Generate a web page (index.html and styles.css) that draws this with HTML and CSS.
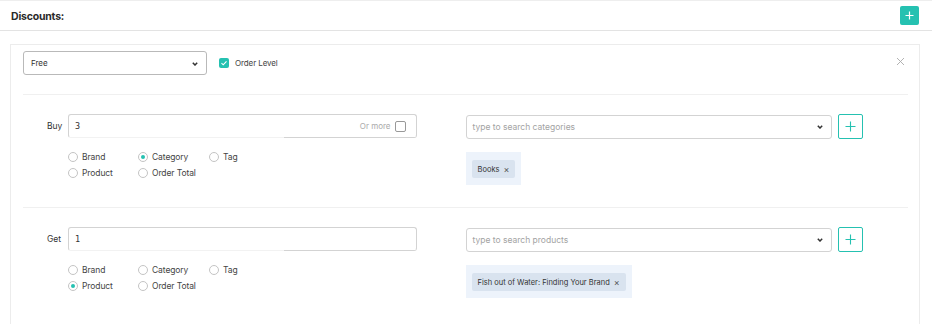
FILE: index.html
```html
<!DOCTYPE html>
<html lang="en">

<head>
    <meta charset="UTF-8">
    <meta name="viewport" content="width=device-width, initial-scale=1.0">
    <title>Discounts</title>
    <link rel="stylesheet" href="styles.css">
</head>

<body>

    <div class="topbar">
        <h2 class="topbar__title">Discounts:</h2>
        <button class="btn-add">
            <svg width="9" height="9" viewBox="0 0 9 9"><path d="M4.5 0.5v8M0.5 4.5h8" stroke="#fff" stroke-width="1.2" /></svg>
        </button>
    </div>

    <div class="content">
        <div class="card">
            <div class="card__head">
                <div class="select select--type">
                    <span>Free</span>
                    <svg class="chevron" width="6" height="4" viewBox="0 0 6 4"><path d="M0.8 0.8l2.2 2.2 2.2-2.2" fill="none" stroke="#333" stroke-width="1.5" /></svg>
                </div>
                <label class="check">
                    <span class="check__box">
                        <svg width="8" height="8" viewBox="0 0 8 8"><path d="M1.5 4.2l1.7 1.6 3.3-3.5" fill="none" stroke="#fff" stroke-width="1.1" /></svg>
                    </span>
                    Order Level
                </label>
                <span class="card__close">
                    <svg width="9" height="9" viewBox="0 0 9 9"><path d="M1 1l7 7M8 1l-7 7" stroke="#aaa" stroke-width="0.9" /></svg>
                </span>
            </div>

            <div class="rule">
                <div class="rule__left">
                    <div class="rule__line">
                        <span class="rule__label">Buy</span>
                        <div class="qty">
                            <span class="qty__value">3</span>
                            <span class="qty__more">Or more <span class="qty__box"></span></span>
                        </div>
                    </div>
                    <div class="radios">
                        <label class="radio"><span class="radio__dot"></span>Brand</label>
                        <label class="radio"><span class="radio__dot radio__dot--on"></span>Category</label>
                        <label class="radio"><span class="radio__dot"></span>Tag</label>
                        <label class="radio"><span class="radio__dot"></span>Product</label>
                        <label class="radio"><span class="radio__dot"></span>Order Total</label>
                    </div>
                </div>
                <div class="rule__right">
                    <div class="search">
                        <div class="select select--search">
                            <span>type to search categories</span>
                            <svg class="chevron" width="6" height="4" viewBox="0 0 6 4"><path d="M0.8 0.8l2.2 2.2 2.2-2.2" fill="none" stroke="#333" stroke-width="1.5" /></svg>
                        </div>
                        <button class="btn-outline">
                            <svg width="11" height="11" viewBox="0 0 11 11"><path d="M5.5 0.5v10M0.5 5.5h10" stroke="#25c1b1" stroke-width="1.1" /></svg>
                        </button>
                    </div>
                    <div class="tags">
                        <span class="tag">Books <span class="tag__x">&times;</span></span>
                    </div>
                </div>
            </div>

            <div class="rule">
                <div class="rule__left">
                    <div class="rule__line">
                        <span class="rule__label">Get</span>
                        <div class="qty">
                            <span class="qty__value">1</span>
                        </div>
                    </div>
                    <div class="radios">
                        <label class="radio"><span class="radio__dot"></span>Brand</label>
                        <label class="radio"><span class="radio__dot"></span>Category</label>
                        <label class="radio"><span class="radio__dot"></span>Tag</label>
                        <label class="radio"><span class="radio__dot radio__dot--on"></span>Product</label>
                        <label class="radio"><span class="radio__dot"></span>Order Total</label>
                    </div>
                </div>
                <div class="rule__right">
                    <div class="search">
                        <div class="select select--search">
                            <span>type to search products</span>
                            <svg class="chevron" width="6" height="4" viewBox="0 0 6 4"><path d="M0.8 0.8l2.2 2.2 2.2-2.2" fill="none" stroke="#333" stroke-width="1.5" /></svg>
                        </div>
                        <button class="btn-outline">
                            <svg width="11" height="11" viewBox="0 0 11 11"><path d="M5.5 0.5v10M0.5 5.5h10" stroke="#25c1b1" stroke-width="1.1" /></svg>
                        </button>
                    </div>
                    <div class="tags">
                        <span class="tag">Fish out of Water: Finding Your Brand <span class="tag__x">&times;</span></span>
                    </div>
                </div>
            </div>
        </div>
    </div>

</body>

</html>
```

FILE: styles.css
```css
* {
    margin: 0;
    padding: 0;
    box-sizing: border-box;
}

:root {
    --teal: #25c1b1;
    --line: #ececec;
    --field: #d3d3d3;
}

html,
body {
    height: 100%;
    overflow: hidden;
}

body {
    font-family: Inter, "Noto Sans", sans-serif;
    font-size: 9px;
    color: #333;
    background: #fff;
}

.topbar {
    height: 31px;
    display: flex;
    align-items: center;
    justify-content: space-between;
    padding: 0 13px 0 11px;
    border-top: 1px solid #eee;
    border-bottom: 1px solid #e3e3e3;
}

.topbar__title {
    font-size: 10.5px;
    font-weight: 700;
    letter-spacing: -0.2px;
    color: #2a2a2a;
    margin-top: 1px;
}

.btn-add {
    width: 19px;
    height: 19px;
    border: none;
    border-radius: 2px;
    background: var(--teal);
    display: flex;
    align-items: center;
    justify-content: center;
}

.content {
    padding: 13px 12px 0 10px;
}

.card {
    border: 1px solid var(--line);
    border-bottom: none;
    padding: 6px 11px 0 12px;
    min-height: 280px;
}

.card__head {
    display: flex;
    align-items: center;
    height: 24px;
    margin-bottom: 19px;
}

.select {
    display: flex;
    align-items: center;
    justify-content: space-between;
    height: 24px;
    border: 1px solid var(--field);
    border-radius: 3px;
    padding: 0 8px 0 7px;
}

.select--type {
    width: 184px;
    border-color: #b9b9b9;
    font-size: 8px;
    color: #333;
}

.chevron {
    margin-top: 1px;
}

.check {
    display: flex;
    align-items: center;
    margin-left: 12px;
    font-size: 8px;
    letter-spacing: -0.1px;
    color: #444;
}

.check__box {
    width: 10px;
    height: 10px;
    border-radius: 2px;
    background: var(--teal);
    margin-right: 6px;
    display: flex;
    align-items: center;
    justify-content: center;
}

.card__close {
    margin-left: auto;
    margin-right: 3px;
    display: flex;
    margin-top: -4px;
}

.rule {
    display: grid;
    grid-template-columns: 1fr 1fr;
    border-top: 1px solid #f0f0f0;
    padding: 19px 0 22px;
}

.rule__left {
    padding: 0 49px 0 24px;
}

.rule__right {
    padding-right: 45px;
}

.rule__line {
    display: flex;
    align-items: center;
}

.rule__label {
    width: 21px;
    font-size: 8.5px;
    color: #333;
}

.qty {
    flex: 1;
    height: 24px;
    display: flex;
    align-items: center;
    justify-content: space-between;
    padding: 0 10px 0 6px;
    border: 1px solid var(--field);
    border-bottom-color: transparent;
    border-radius: 3px;
    background: linear-gradient(to right, #f2f2f2 62%, var(--field) 62%) left bottom / 100% 1px no-repeat;
    background-origin: border-box;
}

.qty__value {
    font-family: "DejaVu Sans Mono", monospace;
    font-size: 8.5px;
    color: #333;
}

.qty__more {
    display: flex;
    align-items: center;
    font-size: 8px;
    color: #aaa;
}

.qty__box {
    width: 11px;
    height: 11px;
    border: 1px solid #999;
    border-radius: 2px;
    margin-left: 4px;
}

.radios {
    display: grid;
    grid-template-columns: 70px 71px auto;
    row-gap: 4px;
    margin: 13px 0 0 21px;
}

.radio {
    display: flex;
    align-items: center;
    font-size: 8.5px;
    letter-spacing: -0.1px;
    color: #444;
    height: 12px;
}

.radio__dot {
    width: 10px;
    height: 10px;
    border: 1px solid #c4c4c4;
    border-radius: 50%;
    margin-right: 4px;
    display: flex;
    align-items: center;
    justify-content: center;
}

.radio__dot--on::after {
    content: "";
    width: 4px;
    height: 4px;
    border-radius: 50%;
    background: var(--teal);
}

.search {
    display: flex;
    align-items: center;
}

.select--search {
    flex: 1;
    font-size: 8.5px;
    color: #a3a3a3;
    padding: 0 8px 0 6px;
}

.btn-outline {
    width: 25px;
    height: 25px;
    margin-left: 6px;
    border: 1px solid var(--teal);
    border-radius: 2px;
    background: #fff;
    display: flex;
    align-items: center;
    justify-content: center;
}

.tags {
    display: inline-flex;
    margin-top: 13px;
    padding: 8px 6px 7px;
    background: #edf3fb;
}

.tag {
    display: flex;
    align-items: center;
    height: 18px;
    padding: 0 6px;
    background: #d9e3ef;
    border-radius: 2px;
    font-size: 7.5px;
    color: #333;
}

.tag__x {
    margin-left: 4px;
    font-size: 9px;
    color: #555;
}
```
